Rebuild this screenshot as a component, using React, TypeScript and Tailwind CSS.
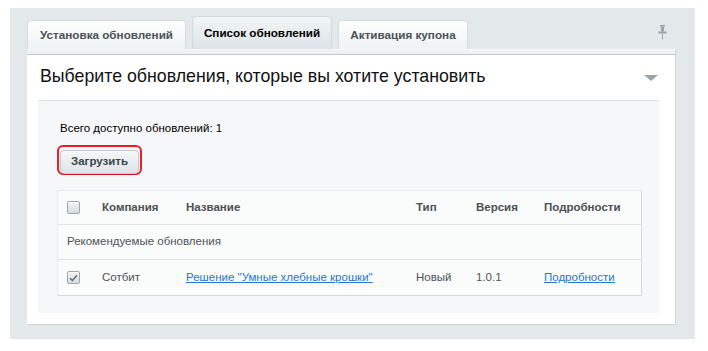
import React from 'react';

const tabs = [
  { label: 'Установка обновлений', w: 'w-[159px]', active: false },
  { label: 'Список обновлений', w: 'w-[140px]', active: true },
  { label: 'Активация купона', w: 'w-[130px]', active: false },
];

const PinIcon = () => (
  <svg width="9" height="15" viewBox="0 0 9 15" className="text-[#9ba4a8]">
    <rect x="2" y="0" width="5" height="1.5" fill="currentColor" />
    <rect x="3" y="1.5" width="3" height="5" fill="currentColor" />
    <rect x="0.5" y="6.5" width="8" height="2" fill="currentColor" />
    <rect x="4" y="8.5" width="1" height="6" fill="currentColor" />
  </svg>
);

const Checkbox = ({ checked }: { checked?: boolean }) => (
  <span className="flex h-[13px] w-[13px] items-center justify-center rounded-[2px] border border-[#9fa7ab] bg-gradient-to-b from-[#f3f5f6] to-[#d5dbde] shadow-[inset_0_1px_0_#fff]">
    {checked && (
      <svg width="9" height="8" viewBox="0 0 9 8">
        <path d="M1 4.2 L3.4 6.5 L8 1.2" fill="none" stroke="#5f676b" strokeWidth="1.4" />
      </svg>
    )}
  </span>
);

const cols = 'grid grid-cols-[35px_84px_230px_60px_68px_1fr] items-center';

export default function App() {
  return (
    <div className="min-h-[351px] bg-white pl-[10px] pt-[8px] font-['Liberation_Sans',Arial,sans-serif]">
      <div className="w-[685px] h-[331px] bg-[#e3e9eb] pl-[17px] pr-[20px] pt-[8px]">
        {/* tabs */}
        <div className="flex items-end gap-[6px] h-[33px]">
          {tabs.map((t) => (
            <div
              key={t.label}
              className={
                t.active
                  ? `${t.w} h-[33px] flex items-center justify-center rounded-t-[4px] border border-b-0 border-[#d2d9dc] bg-gradient-to-b from-[#f2f5f6] to-[#dde4e7] text-[11.7px] font-bold text-[#000]`
                  : `${t.w} h-[29px] flex items-center justify-center rounded-t-[4px] border border-b-0 border-[#d6dcdf] bg-gradient-to-b from-[#ffffff] to-[#eef2f3] text-[11.7px] font-bold text-[#4a5256]`
              }
            >
              {t.label}
            </div>
          ))}
          <div className="flex-1 flex justify-end self-start pt-[9px] pr-[8px]">
            <PinIcon />
          </div>
        </div>

        {/* panel */}
        <div className="h-[275px] bg-white shadow-[1px_1px_0_#cfd6d9]">
          <div className="h-[6px] bg-[#eef2f3] border-t border-[#f7f9f9] border-b border-b-[#bfc7cb]" />
          <div className="h-[45px] flex items-center justify-between pl-[13px] pr-[17px]">
            <h1 className="text-[17.75px] text-[#111] leading-none pb-[1px]">
              Выберите обновления, которые вы хотите установить
            </h1>
            <svg width="14" height="6" viewBox="0 0 14 6">
              <path d="M0 0 H14 L7 6 Z" fill="#9aa3a8" />
            </svg>
          </div>

          <div className="ml-[11px] mr-[16px] h-[213px] bg-[#f5f7f8] border-t border-[#d9e0e3] pl-[19px] pr-[17px]">
            <div className="pt-[20px] pl-[3px] text-[11.5px] text-[#000] leading-[14px]">
              Всего доступно обновлений: 1
            </div>
            <div className="mt-[10px] w-[85px] h-[30px] rounded-[6px] border-2 border-[#ee1c25] p-[1px]">
              <button className="w-full h-full rounded-[4px] border border-[#c3cbcf] bg-gradient-to-b from-[#f6f8f9] to-[#dde3e6] text-[11.5px] font-bold text-[#3a444a] shadow-[0_1px_1px_rgba(0,0,0,0.15)]">
                Загрузить
              </button>
            </div>

            <div className="mt-[15px] bg-[#fafbfb] border border-[#e6eaec] border-r-[#d3d9dc] border-b-[#d3d9dc] text-[11.5px]">
              <div className={`${cols} h-[34px] border-b border-[#dfe4e6] font-bold text-[#4b5053]`}>
                <div className="pl-[9px]"><Checkbox /></div>
                <div className="pl-[9px]">Компания</div>
                <div className="pl-[9px]">Название</div>
                <div className="pl-[9px]">Тип</div>
                <div className="pl-[9px]">Версия</div>
                <div className="pl-[9px]">Подробности</div>
              </div>
              <div className="h-[35px] flex items-center pl-[9px] border-b border-[#dfe4e6] text-[#4f5457]">
                Рекомендуемые обновления
              </div>
              <div className={`${cols} h-[35px] text-[#4f5457]`}>
                <div className="pl-[9px]"><Checkbox checked /></div>
                <div className="pl-[9px]">Сотбит</div>
                <div className="pl-[9px]">
                  <a href="#" className="text-[#2675d7] underline">Решение "Умные хлебные крошки"</a>
                </div>
                <div className="pl-[9px]">Новый</div>
                <div className="pl-[9px]">1.0.1</div>
                <div className="pl-[9px]">
                  <a href="#" className="text-[#2675d7] underline">Подробности</a>
                </div>
              </div>
            </div>
          </div>
        </div>
      </div>
    </div>
  );
}
